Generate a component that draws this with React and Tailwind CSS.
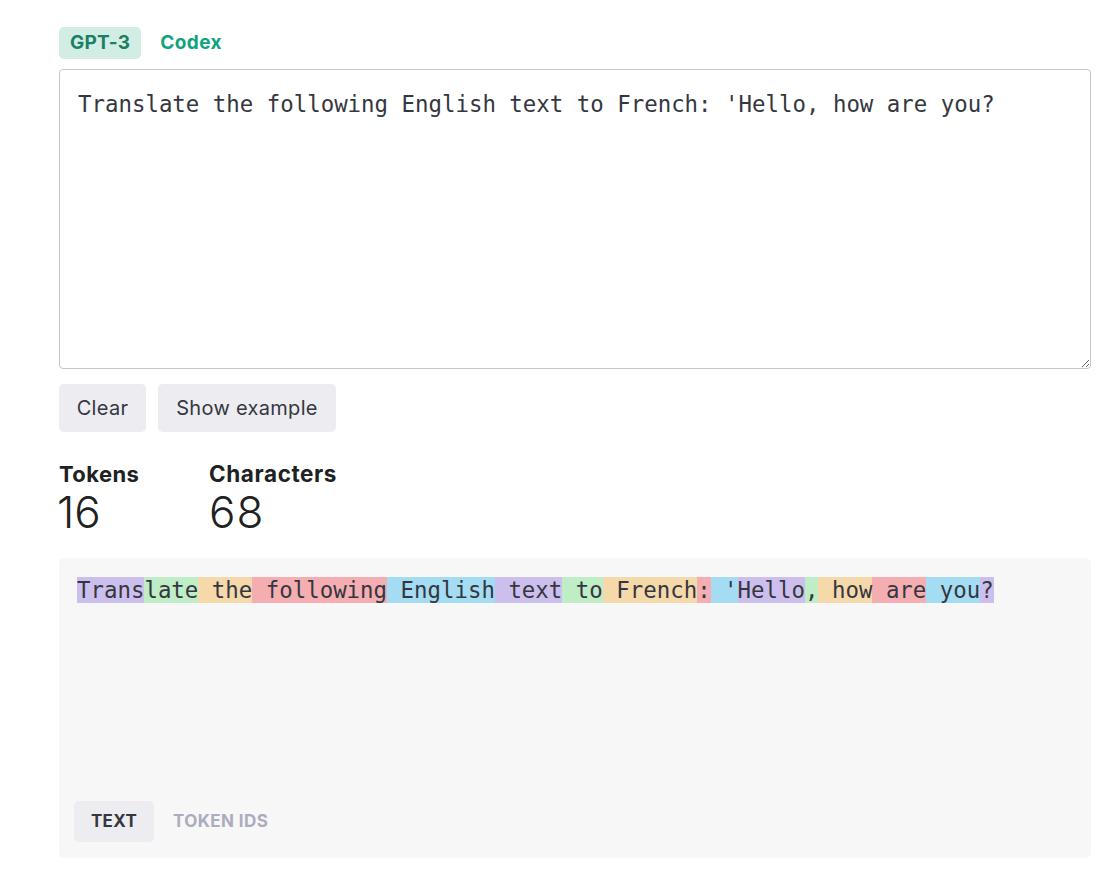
const tokens = [
  'Trans', 'late', ' the', ' following', ' English', ' text', ' to', ' French',
  ':', " '", 'Hello', ',', ' how', ' are', ' you', '?',
];

const colors = [
  'bg-[rgba(107,64,216,0.3)]',
  'bg-[rgba(104,222,122,0.4)]',
  'bg-[rgba(244,172,54,0.4)]',
  'bg-[rgba(239,65,70,0.4)]',
  'bg-[rgba(39,181,234,0.4)]',
];

const text = "Translate the following English text to French: 'Hello, how are you?";

export default function App() {
  return (
    <div className="min-h-screen bg-white font-['Inter',sans-serif] text-[#202123]">
      <div className="pl-[59px] pr-[26px] pt-[27px] pb-[19px]">
        {/* model tabs */}
        <div className="flex items-center gap-[9px]">
          <div className="h-[32px] px-[11px] rounded-[5px] bg-[#d2ede4] text-[#1a7f64] text-[19px] font-bold tracking-[0.2px] flex items-center">
            GPT-3
          </div>
          <div className="h-[32px] px-[10px] text-[#10a37f] text-[19px] font-bold tracking-[0.4px] flex items-center">
            Codex
          </div>
        </div>

        {/* input */}
        <textarea
          className="mt-[10px] block w-full h-[300px] border border-[#c5c5d2] rounded-[4px] px-[18px] pt-[21px] font-['DejaVu_Sans_Mono',monospace] text-[22.4px] leading-[26px] text-[#353740] outline-none resize-y"
          defaultValue={text}
        />

        <div className="mt-[15px] flex gap-[12px]">
          <button className="h-[48px] w-[87px] rounded-[5px] bg-[#ececf1] text-[20px] tracking-[0.3px] text-[#353740]">Clear</button>
          <button className="h-[48px] w-[178px] rounded-[5px] bg-[#ececf1] text-[20px] tracking-[0.3px] text-[#353740]">Show example</button>
        </div>

        {/* stats */}
        <div className="mt-[29px] flex">
          <div className="w-[150px]">
            <div className="text-[22px] font-bold tracking-[0.4px] leading-[26px]">Tokens</div>
            <div className="text-[44px] font-light leading-[51px] -ml-[2px]">16</div>
          </div>
          <div>
            <div className="text-[22.5px] font-bold tracking-[0.6px] leading-[26px]">Characters</div>
            <div className="text-[44px] font-light leading-[51px] tracking-[1px]">68</div>
          </div>
        </div>

        {/* tokenized output */}
        <div className="mt-[20px] h-[300px] rounded-[5px] bg-[#f7f7f8] px-[18px] pt-[19px] pb-[16px] flex flex-col">
          <div className="flex-1 font-['DejaVu_Sans_Mono',monospace] text-[22.4px] leading-[26px] text-[#353740] whitespace-pre">
            {tokens.map((t, i) => (
              <span key={i} className={colors[i % 5]}>{t}</span>
            ))}
          </div>
          <div className="flex items-center gap-[4px] -ml-[3px]">
            <div className="h-[41px] w-[80px] justify-center rounded-[5px] bg-[#ececf1] text-[17px] font-bold tracking-[0.3px] text-[#353740] flex items-center">
              TEXT
            </div>
            <div className="h-[41px] px-[15px] text-[17px] font-bold tracking-[0.4px] text-[#acacbe] flex items-center">
              TOKEN IDS
            </div>
          </div>
        </div>
      </div>
    </div>
  );
}
